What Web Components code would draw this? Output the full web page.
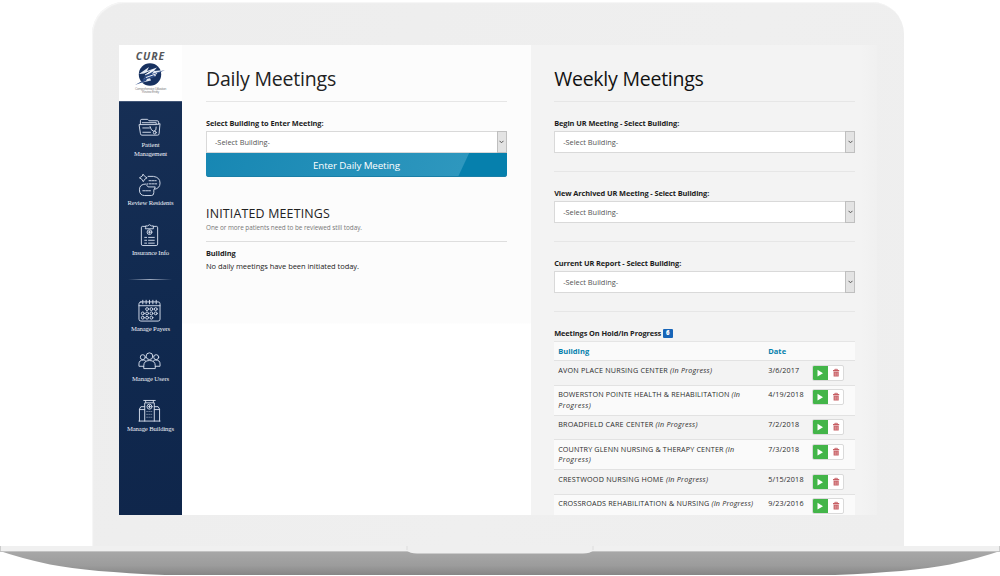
<!DOCTYPE html>
<html lang="en"><head><meta charset="utf-8"><title>CURE Meetings</title>
<style>html,body{margin:0;width:1000px;height:576px;overflow:hidden;background:#fff;font-family:"Open Sans",sans-serif}</style></head>
<body><cure-laptop></cure-laptop>
<script>
const define = (name, html, setup) => customElements.define(name, class extends HTMLElement {
  connectedCallback() {
    if (this.shadowRoot) return;
    const root = this.attachShadow({mode: 'open'});
    root.innerHTML = typeof html === 'function' ? html(this) : html;
    if (setup) setup(this, root);
  }
});

// A single line whose tracking is adjusted to fill the width in "w".
define('fit-text', '<style>:host{display:inline-block;white-space:pre;vertical-align:top}span{display:inline-block}</style><span><slot></slot></span>', (el, root) => {
  const w = +el.getAttribute('w'), s = root.querySelector('span');
  const n = el.textContent.length;
  s.style.letterSpacing = ((w - s.getBoundingClientRect().width) / n) + 'px';
});

const icons = {
  patient: '<path d="M2.500 9V5.500Q2.500 4 4 4H10L11.500 5.500H20Q21.500 5.500 21.500 7V9"/><path d="M4.500 7.500H19V9"/><path d="M1.500 9.500H19L23 8.500L22 19Q22 20.500 20.500 20.500H4Q2.500 20.500 2.500 19Z"/><path d="M5 13H12M5 17.500H13"/><path d="M12.500 11.500Q13.500 16 16.500 16.500Q19.500 16 19 12"/><circle cx="17.500" cy="17.800" r="1.500"/>',
  review: '<path d="M10.500 3H16Q23 4 23 10Q23 15.500 17 16.500L18 14H10.500Q8.500 13 9.500 10.500"/><path d="M5.500 1L7 3L9.500 4.500L7 6L5.500 8.500L4 6L1.500 4.500L4 3Z"/><path d="M8 11Q1.500 11 1.500 17Q1.500 23 7 23H14Q16.500 23 16.500 20V17"/><path d="M11.500 7.500H19M11.500 10.800H19.500M5 18H13" stroke-dasharray="2 1"/>',
  insurance: '<path d="M8 3H4.500Q3.500 3 3.500 4.500V21.500Q3.500 23 5 23H19Q20.500 23 20.500 21.500V4.500Q20.500 3 19.500 3H16"/><path d="M8 4V2.500H10Q12 0 14 2.500H16V5.500H8Z"/><circle cx="12" cy="9" r="2.500"/><path d="M12 7.800V10.200M10.800 9H13.200"/><path d="M7 14.500H9M11 14.500H17M7 17.500H9M11 17.500H17M7 20.500H9M11 20.500H17"/>',
  payers: '<rect x="1" y="2.500" width="22" height="20" rx="2"/><path d="M1 6.500H23M5 .8V4.500M8.500 .8V4.500M12 .8V4.500M15.500 .8V4.500M19 .8V4.500"/>' + [[9.5,10],[14,10],[18.5,10],[5,14.500],[9.500,14.500],[14,14.500],[18.5,14.500],[5,19],[9.500,19],[14,19]].map(p => `<circle cx="${p[0]}" cy="${p[1]}" r="1.5"/>`).join(''),
  users: '<g transform="translate(0 -1)"><circle cx="12" cy="8" r="3.500"/><circle cx="5" cy="9" r="2.600"/><circle cx="19" cy="9" r="2.600"/><path d="M6 20.500V18Q6 12.500 12 12.500Q18 12.500 18 18V20.500ZM6 18.500H1V16Q1 12 5.500 12Q7 12 8 13M18 18.500H23V16Q23 12 18.500 12Q17 12 16 13"/></g>',
  buildings: '<path d="M7 22.500V3.500H17V22.500M6 1H18M8 1V3M16 1V3M1.500 22.500V10L3 7.500H7M17 7.500H21L22.500 10V22.500M1 22.500H23M1.500 10.500H7M17 10.500H22.500"/><circle cx="12" cy="7.500" r="2.600"/><path d="M12 6.300V8.700M10.800 7.500H13.200"/><path d="M9 12.500H15M9 15.500H15M9 18.500H15" stroke-dasharray="1 1.200" opacity=".5"/>'
};
define('nav-item', el => `<style>:host{display:flex;flex-direction:column;align-items:center;height:34px;color:#eef1f8;font:6.700px/8.600px "Liberation Serif",serif;text-align:center}
svg{width:23px;height:24px;margin:0 1px 2px 0;fill:none;stroke:#d3dbea;stroke-width:1;stroke-linecap:round;flex:none}</style>
<svg viewBox="0 0 24 24">${icons[el.getAttribute('icon')]}</svg><slot></slot>`);

define('cure-logo', `<style>:host{display:flex;flex-direction:column;align-items:center;height:56px;background:#fff;box-sizing:border-box;padding-top:6px;font-family:"Liberation Sans",sans-serif}
b{font:italic bold 10.500px/11px "Open Sans","Liberation Sans",sans-serif;color:#55575b}svg{display:block;width:32px;height:24px;margin-top:0}
small{display:flex;flex-direction:column;align-items:center;font-size:3.300px;line-height:3.300px;color:#888;margin-top:2px}</style>
<b><fit-text w="29.500">CURE</fit-text></b>
<svg viewBox="0 0 32 24"><circle cx="16" cy="12.500" r="11.200" fill="#173160"/><path d="M5 12L15 5L13 9L23 5.500L20 9L31 8L21 12L22 14L16 16L17 18.500L4 21.500L12 17.500L9.500 16.500L16 13L12 12.500L17 8.500L10 11.500Z" fill="#e3e9f3"/><path d="M1 20.500L11 15.500L10 14.500L20 9L18 12L31 8L20 13L21 15L13 17L12 19L1 23L9 18.500L8.500 17.500L14 14L5 18.500Z" fill="#2b4a84"/><path d="M11 13L20 7.500M12 15.500L23 11.500" stroke="#fff" stroke-width=".9"/></svg>
<small><fit-text w="31">Comprehensive Utilization</fit-text><fit-text w="17">Review Entity</fit-text></small>`);

define('side-bar', `<style>:host{display:flex;flex-direction:column;width:63px;background:linear-gradient(170deg,#183056,#10294f 60%,#0f264b)}
nav{display:flex;flex-direction:column;padding-top:14px;box-shadow:inset 0 1px #435778}
nav>*{margin-bottom:16px}.first{height:42px}hr{width:44px;height:1px;border:0;margin:6px auto 19px;background:linear-gradient(90deg,transparent,#9fabc0,transparent)}</style>
<cure-logo></cure-logo><nav>
<nav-item class="first" icon="patient"><fit-text w="18">Patient</fit-text><fit-text w="33">Management</fit-text></nav-item>
<nav-item icon="review"><fit-text w="46">Review Residents</fit-text></nav-item>
<nav-item icon="insurance"><fit-text w="37">Insurance Info</fit-text></nav-item>
<hr>
<nav-item icon="payers"><fit-text w="39">Manage Payers</fit-text></nav-item>
<nav-item icon="users"><fit-text w="37">Manage Users</fit-text></nav-item>
<nav-item icon="buildings"><fit-text w="47">Manage Buildings</fit-text></nav-item></nav>`);

define('panel-title', `<style>:host{display:block;height:57px;box-sizing:border-box;border-bottom:1px solid #e6e6e6;padding-top:20px;font-size:19.500px;line-height:27px;color:#222}</style><slot></slot>`);

define('select-field', el => `<style>:host{display:block}label{display:block;font:bold 7.400px/11px "Open Sans",sans-serif;color:#1c1c1c;height:13px}
.box{display:flex;height:22px;box-sizing:border-box;background:#fff;border:1px solid #d9d9d9;font-size:7.400px;line-height:20px;color:#555;padding-left:8px;justify-content:space-between}
i{display:flex;align-items:center;justify-content:center;width:8px;background:#e3e3e3;border:1px solid #bfbfbf;margin:-1px}svg{width:5px;height:4px;fill:none;stroke:#555}</style>
<label><fit-text w="${el.getAttribute('w')}">${el.getAttribute('label')}</fit-text></label>
<div class="box"><fit-text w="55">-Select Building-</fit-text><i><svg viewBox="0 0 5 4"><path d="M.5 .8L2.500 2.800L4.500 .8"/></svg></i></div>`);

define('daily-panel', `<style>:host{display:block;box-sizing:border-box;width:349px;padding:0 24px;background:linear-gradient(#fcfcfc 278px,#fff 279px);color:#222}
select-field{margin-top:16px}button{display:block;width:301px;height:24px;padding:1px 0 0;border:0;border-radius:0 0 3px 3px;font:9.800px/23px "Open Sans",sans-serif;color:#fff;background:linear-gradient(115deg,#1787b3 0,#2e97be 238px,#0680ad 239px);box-shadow:inset 0 -1px #1a7fa7}
h2{margin:29px 0 0;font-weight:400;font-size:12.400px;line-height:15px}p{margin:0;color:#777;font-size:6.400px;line-height:13px;height:20px;border-bottom:1px solid #dedede}
h3{margin:6px 0 0;font-size:7.400px;line-height:11px}.none{font-size:7.500px;line-height:13px;margin-top:1px}</style>
<panel-title><fit-text w="130">Daily Meetings</fit-text></panel-title>
<select-field w="117.5" label="Select Building to Enter Meeting:"></select-field>
<button><fit-text w="87">Enter Daily Meeting</fit-text></button>
<h2><fit-text w="124">INITIATED MEETINGS</fit-text></h2><p><fit-text w="156">One or more patients need to be reviewed still today.</fit-text></p>
<h3><fit-text w="29.5">Building</fit-text></h3><div class="none"><fit-text w="153">No daily meetings have been initiated today.</fit-text></div>`);

define('meeting-row', el => `<style>:host{display:grid;grid-template-columns:210px 43.500px 32px;box-sizing:border-box;height:${el.getAttribute('h')}px;padding-left:4px;border-top:1px solid #e2e2e2;font-size:7.200px;line-height:10.500px;color:#2c2c2c;background:var(--row)}
.name,.date{padding-top:3.500px}.actions{display:flex;margin-top:3.500px;height:16px;width:32px;box-sizing:border-box;border:1px solid #dadada;border-radius:2px;overflow:hidden;background:#fff}
svg{display:block;width:16px;height:16px;margin:-1px 0 0 -1px;flex:none}svg+svg{margin-left:0}</style>
<div class="name"><slot></slot></div><div class="date"><fit-text w="${el.getAttribute('dw')}">${el.getAttribute('date')}</fit-text></div>
<div class="actions"><svg viewBox="0 0 16 16"><path d="M0 0H16V16H0Z" fill="#43b549"/><path d="M5.500 4.800L11 8.200L5.500 11.600Z" fill="#fff"/></svg>
<svg viewBox="0 0 16 16"><path d="M6.800 5V4.300H9.400V5" fill="none" stroke="#c15359" stroke-width=".8"/><path d="M5 5H11.200V6.300H5ZM5.600 6.800H10.700V11.500H5.600Z" fill="#c75e63"/><path d="M7.200 7.500V10.800M9.100 7.500V10.800" stroke="#f3cfd0" stroke-width=".6"/></svg></div>`);

define('weekly-panel', `<style>:host{display:block;box-sizing:border-box;width:346px;height:470px;overflow:hidden;padding:0 22px 0 23.200px;background:linear-gradient(90deg,#f3f3f3 330px,#f0f0f0);color:#222}
panel-title{color:#111;width:301px}section{width:301px;height:70px;box-sizing:border-box;padding-top:16px;border-bottom:1px solid #e6e6e6}
.held{display:flex;align-items:center;height:28.500px;box-sizing:border-box;padding-top:13.500px;font:bold 7.400px/11px "Open Sans",sans-serif}
.held b{width:10px;height:9px;margin-left:1.500px;border-radius:1px;background:#1765b8;color:#fff;font-size:6px;line-height:9px;text-align:center}
.head{display:grid;grid-template-columns:210px 1fr;width:301px;height:19.500px;box-sizing:border-box;padding-left:4px;border-top:1px solid #e5e5e5;background:#fafafa;color:#0580ad;font:bold 7.500px/18px "Open Sans",sans-serif}
meeting-row{width:301px;--row:#f3f3f3}meeting-row.alt{--row:#fafafa}</style>
<panel-title><fit-text w="149.5">Weekly Meetings</fit-text></panel-title>
<section><select-field w="125" label="Begin UR Meeting - Select Building:"></select-field></section>
<section><select-field w="155" label="View Archived UR Meeting - Select Building:"></select-field></section>
<section><select-field w="127" label="Current UR Report - Select Building:"></select-field></section>
<div class="held"><fit-text w="107">Meetings On Hold/In Progress</fit-text><b>6</b></div>
<div class="head"><fit-text w="31">Building</fit-text><fit-text w="18">Date</fit-text></div>
<meeting-row h="24.5" date="3/6/2017" dw="31"><fit-text w="154">AVON PLACE NURSING CENTER <i>(In Progress)</i></fit-text></meeting-row>
<meeting-row class="alt" h="30" date="4/19/2018" dw="35.500"><fit-text w="182">BOWERSTON POINTE HEALTH &amp; REHABILITATION <i>(In</i></fit-text><br><fit-text w="33"><i>Progress)</i></fit-text></meeting-row>
<meeting-row h="24.500" date="7/2/2018" dw="31"><fit-text w="139.500">BROADFIELD CARE CENTER <i>(In Progress)</i></fit-text></meeting-row>
<meeting-row class="alt" h="30" date="7/3/2018" dw="31"><fit-text w="176">COUNTRY GLENN NURSING &amp; THERAPY CENTER <i>(In</i></fit-text><br><fit-text w="33"><i>Progress)</i></fit-text></meeting-row>
<meeting-row h="24.500" date="5/15/2018" dw="35.500"><fit-text w="150">CRESTWOOD NURSING HOME <i>(In Progress)</i></fit-text></meeting-row>
<meeting-row class="alt" h="24" date="9/23/2016" dw="35.500"><fit-text w="195">CROSSROADS REHABILITATION &amp; NURSING <i>(In Progress)</i></fit-text></meeting-row>`);

define('laptop-base', `<style>:host{display:block;height:30px}svg{display:block}</style>
<svg width="1000" height="30" viewBox="0 0 1000 30"><defs><linearGradient id="g" x2="0" y2="1"><stop stop-color="#a8a8a8"/><stop offset=".6" stop-color="#9c9c9c"/><stop offset="1" stop-color="#868686"/></linearGradient></defs>
<path d="M0 5Q20 12 50 18.500Q90 26 165 29H835Q910 26 950 18.500Q980 12 1000 5Z" fill="url(#g)"/>
<path d="M0 0H1000V5L998 6H2L0 5Z" fill="#f0f0f0"/><path d="M0 5.500H1000" stroke="#c2c2c2"/><path d="M0 0V5M1000 0V5" stroke="#ccc" stroke-width="2"/>
<path d="M406 0H594V4Q590 7.500 583 7.500H417Q410 7.500 406 4Z" fill="#efefef"/><path d="M407 0V4M593 0V4" stroke="#ddd"/></svg>`);

define('cure-laptop', `<style>:host{display:block;padding-top:2px;width:1000px;height:574px}
.lid{box-sizing:border-box;width:812px;height:544px;margin-left:92.200px;padding:43px 0 0 26.800px;border-radius:32px 32px 0 0;background:linear-gradient(120deg,#ededed,#efefef 60%,#eee);box-shadow:inset 1px 1px 1px #f7f7f7}
.screen{display:flex;width:758px;height:470px;overflow:hidden}</style>
<div class="lid"><div class="screen"><side-bar></side-bar><daily-panel></daily-panel><weekly-panel></weekly-panel></div></div><laptop-base></laptop-base>`);
</script></body></html>
